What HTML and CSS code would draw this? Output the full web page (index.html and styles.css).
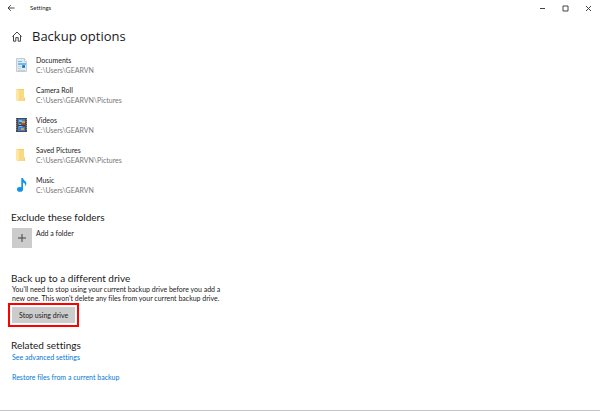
FILE: index.html
```
<!DOCTYPE html>
<html lang="en">
<head>
  <meta charset="UTF-8">
  <meta name="viewport" content="width=device-width, initial-scale=1.0">
  <title>Settings</title>
  <link rel="stylesheet" href="styles.css">
</head>
<body>
  <header class="titlebar">
    <button type="button" class="title-button" aria-label="Back">
      <svg width="8" height="8" viewBox="0 0 8 8"><path d="M7.500 4H1M3.800 1.200L1 4l2.800 2.800"/></svg>
    </button>
    <span class="title">Settings</span>
    <div class="window-buttons">
      <button type="button" class="title-button" aria-label="Minimize">
        <svg width="7" height="7" viewBox="0 0 7 7"><path d="M1 3.500h5"/></svg>
      </button>
      <button type="button" class="title-button" aria-label="Maximize">
        <svg width="7" height="7" viewBox="0 0 7 7"><path d="M1 1h5v5H1z"/></svg>
      </button>
      <button type="button" class="title-button" aria-label="Close">
        <svg width="7" height="7" viewBox="0 0 7 7"><path d="M1 1l5 5M6 1L1 6"/></svg>
      </button>
    </div>
  </header>

  <main>
    <div class="page-header">
      <a href="#" class="home" aria-label="Home">
        <svg width="10" height="11" viewBox="0 0 10 11"><path d="M.4 5.600L5 1l4.600 4.600M1.500 4.600v5.600h2.300V6.600h2.400v3.600h2.300V4.600"/></svg>
      </a>
      <h1>Backup options</h1>
    </div>

    <ul class="folder-list">
      <li class="folder">
        <svg class="folder-icon" width="12" height="14" viewBox="0 0 12 14">
          <path d="M.5.5h8l2 3v10H.5z" fill="#e3eaef" stroke="#c3cdd4"/>
          <path d="M8.500.5v3h2" fill="#fff" stroke="#c3cdd4"/>
          <path d="M2 3h4v1H2zM2 5h8v2H2z" fill="#6bbcf0"/>
          <path d="M6 7h3v3H6z" fill="#3b91c9"/>
          <path d="M2 8h3v1H2zM2 10h3v1H2zM2 12h7v1H2z" fill="#c1d1dc"/>
          <path d="M7 8h2v1H7z" fill="#23648b"/>
        </svg>
        <div class="folder-info">
          <span class="folder-name">Documents</span>
          <span class="folder-path">C:\Users\GEARVN</span>
        </div>
      </li>
      <li class="folder">
        <svg class="folder-icon" width="12" height="14" viewBox="0 0 12 14">
          <path d="M1 1h7v8l1 1v3H1z" fill="#f0cf72"/>
          <path d="M0 1l3 1v11l-3-1z" fill="#ffe79f"/>
          <path d="M3 2h5v11H3z" fill="#f8da85"/>
        </svg>
        <div class="folder-info">
          <span class="folder-name">Camera Roll</span>
          <span class="folder-path">C:\Users\GEARVN\Pictures</span>
        </div>
      </li>
      <li class="folder">
        <svg class="folder-icon" width="12" height="14" viewBox="0 0 12 14">
          <path d="M0 0h11v14H0z" fill="#4a4a50"/>
          <path d="M2 1h7v12H2z" fill="#3f7fd6"/>
          <path d="M3 2h3v2H3zM3 8h3v1H3z" fill="#79b9f2"/>
          <path d="M6 3h3v2H6zM3 6h2v1H3z" fill="#c9a83c"/>
          <path d="M5 5h4v2H5z" fill="#b84432"/>
          <path d="M7 7h2v2H7zM3 4h2v2H3z" fill="#2f7a52"/>
          <path d="M2 7h7v1H2z" fill="#23386b"/>
          <path d="M5 10h3v2H5z" fill="#c5a948"/>
          <path d="M.5 1v12M10.500 1v12" fill="none" stroke="#858589" stroke-dasharray="1 1"/>
        </svg>
        <div class="folder-info">
          <span class="folder-name">Videos</span>
          <span class="folder-path">C:\Users\GEARVN</span>
        </div>
      </li>
      <li class="folder">
        <svg class="folder-icon" width="12" height="14" viewBox="0 0 12 14">
          <path d="M1 1h7v8l1 1v3H1z" fill="#f0cf72"/>
          <path d="M0 1l3 1v11l-3-1z" fill="#ffe79f"/>
          <path d="M3 2h5v11H3z" fill="#f8da85"/>
        </svg>
        <div class="folder-info">
          <span class="folder-name">Saved Pictures</span>
          <span class="folder-path">C:\Users\GEARVN\Pictures</span>
        </div>
      </li>
      <li class="folder">
        <svg class="folder-icon" width="12" height="14" viewBox="0 0 12 14">
          <ellipse cx="4" cy="11.400" rx="3" ry="2.300" fill="#1193ea"/>
          <path d="M5.300 0H7c.2 2.400 3.400 3 3.400 5.600 0 1.200-.4 2-1 2.700.3-2.200-.9-3.300-2.400-3.700v6.800H5.300z" fill="#1193ea"/>
        </svg>
        <div class="folder-info">
          <span class="folder-name">Music</span>
          <span class="folder-path">C:\Users\GEARVN</span>
        </div>
      </li>
    </ul>

    <section class="exclude">
      <h2>Exclude these folders</h2>
      <button type="button" class="add-folder">
        <span class="add-icon">
          <svg width="8" height="8" viewBox="0 0 8 8"><path d="M4 0v8M0 4h8"/></svg>
        </span>
        <span>Add a folder</span>
      </button>
    </section>

    <section class="drive">
      <h2>Back up to a different drive</h2>
      <p>You'll need to stop using your current backup drive before you add a new one. This won't delete any files from your current backup drive.</p>
      <div class="highlight">
        <button type="button" class="btn">Stop using drive</button>
      </div>
    </section>

    <section class="related">
      <h2>Related settings</h2>
      <a href="#">See advanced settings</a>
      <a href="#">Restore files from a current backup</a>
    </section>
  </main>
</body>
</html>
```
FILE: styles.css
```
* {
  box-sizing: border-box;
}
body {
  display: flex;
  flex-direction: column;
  min-height: 100vh;
  margin: 0;
  background-color: #fff;
  border-bottom: 1px solid #c4c4c6;
  color: #1a1a1a;
  font-family: Lato, "Open Sans", sans-serif;
  font-size: 7px;
  font-variant-ligatures: none;
  line-height: 10px;
}
button {
  padding: 0;
  border: none;
  background: none;
  color: inherit;
  font: inherit;
}
h1, h2, p, ul {
  margin: 0;
  padding: 0;
  font-weight: 400;
}
svg {
  display: block;
}
.titlebar {
  display: flex;
  align-items: center;
  height: 16px;
  padding-left: 7px;
  font-size: 6px;
}
.title-button {
  display: flex;
  align-items: center;
  justify-content: center;
  width: 23px;
  height: 16px;
}
.titlebar > .title-button {
  width: 8px;
}
.titlebar svg,
.home svg,
.add-icon svg {
  fill: none;
  stroke: #444;
}
.title {
  margin-left: 15px;
}
.window-buttons {
  display: flex;
  margin-left: auto;
}
main {
  padding: 8px 12px 0;
}
.page-header {
  display: flex;
  align-items: center;
  gap: 10px;
}
h1 {
  font-family: "Open Sans", sans-serif;
  font-size: 13px;
  line-height: 24px;
}
h2 {
  margin-left: -1px;
  font-size: 10px;
  line-height: 14px;
}
.folder-list {
  display: grid;
  gap: 10px;
  margin-top: 7px;
  list-style: none;
}
.folder {
  display: flex;
  align-items: center;
  gap: 8px;
  padding-left: 4px;
}
.folder-info {
  display: flex;
  flex-direction: column;
}
.folder-path {
  color: #767676;
}
.exclude {
  margin-top: 15px;
}
.add-folder {
  display: flex;
  gap: 4px;
  margin-top: 4px;
}
.add-icon {
  display: flex;
  align-items: center;
  justify-content: center;
  width: 20px;
  height: 20px;
  background-color: #ccc;
}
.drive {
  margin-top: 23px;
}
.drive p {
  max-width: 220px;
  line-height: 9px;
}
.highlight {
  width: fit-content;
  margin-left: -4px;
  padding: 2px;
  border: 2px solid #f00;
}
.btn {
  display: block;
  padding: 3px 7px;
  background-color: #ccc;
}
.related {
  display: flex;
  flex-direction: column;
  align-items: flex-start;
  margin-top: 11px;
}
.related a {
  color: #0078d7;
  text-decoration: none;
}
.related a + a {
  margin-top: 10px;
}
```
